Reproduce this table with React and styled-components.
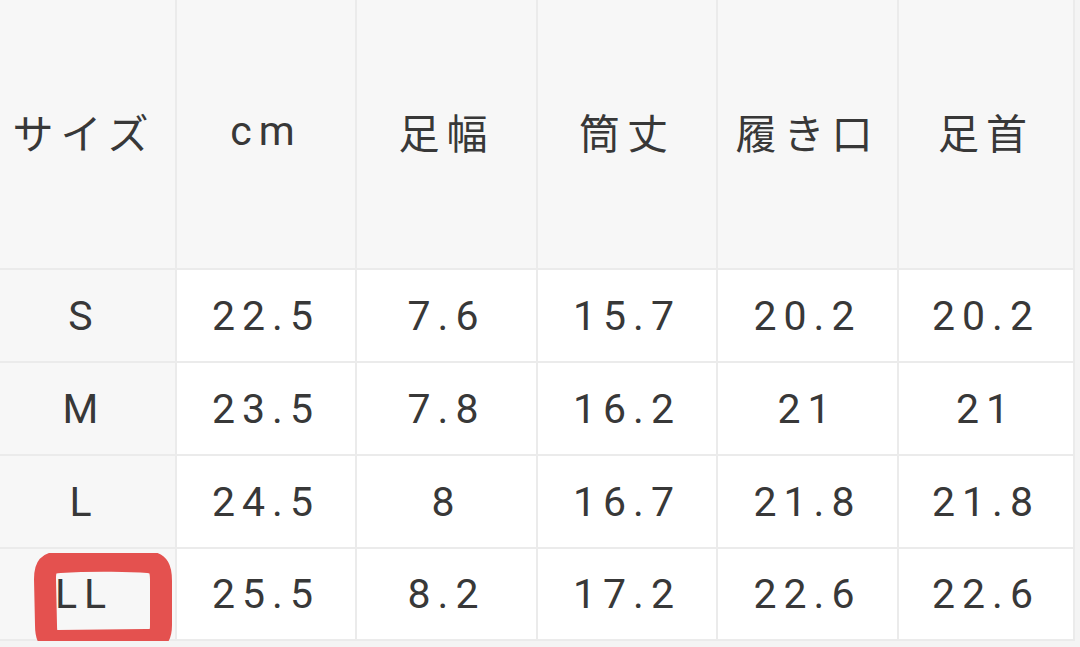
import React from 'react';
import styled, { createGlobalStyle } from 'styled-components';

const GlobalStyle = createGlobalStyle`
  html, body {
    margin: 0;
    padding: 0;
    background: #f4f4f4;
    overflow: hidden;
  }
`;

const Table = styled.div`
  display: grid;
  grid-template-columns: 182px 178px 179px 178px 179px 174px;
  grid-template-rows: 268px 91px 91px 91px 90px;
  gap: 2px;
  padding: 0 2px 2px 0;
  margin-left: -7px;
  width: max-content;
  background: #ebebeb;
  color: #383838;
  font-family: Roboto, 'Noto Sans CJK JP', sans-serif;
  font-size: 41px;
  letter-spacing: 7px;
`;

const Cell = styled.div`
  position: relative;
  display: flex;
  align-items: center;
  justify-content: center;
  padding-bottom: ${(p) => (p.$top ? '6px' : '0')};
  background: ${(p) => (p.$head ? '#f7f7f7' : '#ffffff')};
  white-space: nowrap;
`;

const Marker = styled.svg`
  position: absolute;
  left: 41px;
  top: 4px;
  width: 140px;
  height: 96px;
  pointer-events: none;
`;

const headers = ['サイズ', 'cm', '足幅', '筒丈', '履き口', '足首'];

const rows = [
  ['S', '22.5', '7.6', '15.7', '20.2', '20.2'],
  ['M', '23.5', '7.8', '16.2', '21', '21'],
  ['L', '24.5', '8', '16.7', '21.8', '21.8'],
  ['LL', '25.5', '8.2', '17.2', '22.6', '22.6'],
];

const App = () => (
  <>
    <GlobalStyle />
    <Table>
      {headers.map((h) => (
        <Cell $head $top key={h}>
          {h}
        </Cell>
      ))}
      {rows.map((row) =>
        row.map((value, i) => (
          <Cell $head={i === 0} key={`${row[0]}-${i}`}>
            {value}
            {i === 0 && row[0] === 'LL' && (
              <Marker viewBox="0 0 140 96">
                <path
                  d="M26 9 C60 7 100 8 114 9 C125 10 127 16 127 28 L127 72 C127 84 124 87 112 87 L24 88 C14 88 12 84 12 72 L11 26 C11 13 14 10 26 9 Z"
                  fill="none"
                  stroke="#e4514f"
                  strokeWidth="22"
                  strokeLinejoin="round"
                />
              </Marker>
            )}
          </Cell>
        ))
      )}
    </Table>
  </>
);

export default App;
